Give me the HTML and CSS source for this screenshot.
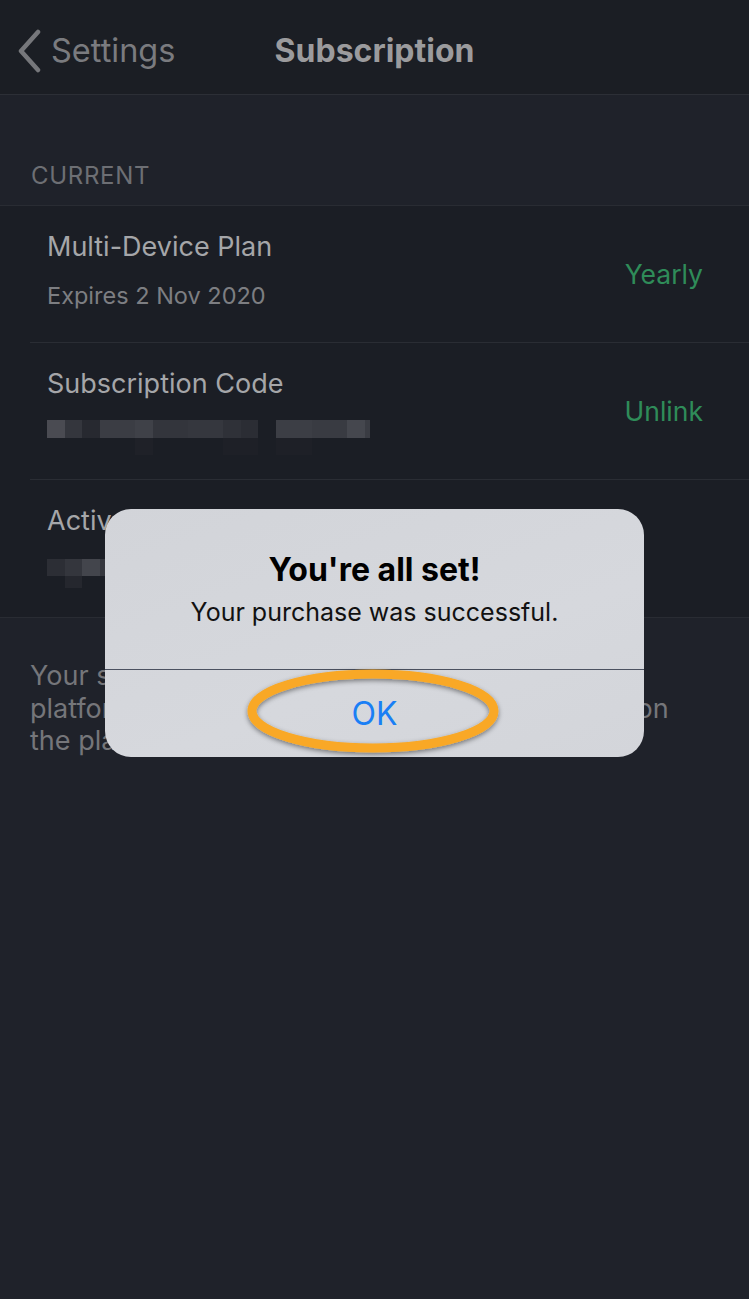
FILE: index.html
```html
<!DOCTYPE html>
<html>
<head>
    <title>Subscription</title>
    <link rel="stylesheet" href="styles.css">
</head>
<body>
    <div class="screen">
        <div class="navbar">
            <a class="back">
                <svg class="chevron" width="26" height="44" viewBox="0 0 26 44"><path d="M22 3 L5 22 L22 41" fill="none" stroke="#76777b" stroke-width="4.5" stroke-linecap="round" stroke-linejoin="round"/></svg>
                <span>Settings</span>
            </a>
            <div class="nav-title">Subscription</div>
        </div>

        <div class="section-header">CURRENT</div>

        <div class="group">
            <div class="row">
                <div class="row-main">
                    <div class="row-title">Multi-Device Plan</div>
                    <div class="row-sub">Expires 2 Nov 2020</div>
                </div>
                <div class="row-action">Yearly</div>
            </div>
            <div class="row">
                <div class="row-main">
                    <div class="row-title">Subscription Code</div>
                    <svg class="blur" width="330" height="36" viewBox="0 0 330 36">
                        <rect x="0" y="0" width="18" height="18" fill="#4a4b52"/>
                        <rect x="18" y="0" width="17" height="18" fill="#34363d"/>
                        <rect x="35" y="0" width="18" height="18" fill="#272930"/>
                        <rect x="53" y="0" width="35" height="18" fill="#3b3d44"/>
                        <rect x="88" y="0" width="18" height="18" fill="#3f4148"/>
                        <rect x="106" y="0" width="35" height="18" fill="#33353c"/>
                        <rect x="141" y="0" width="35" height="18" fill="#35373e"/>
                        <rect x="176" y="0" width="18" height="18" fill="#2f3138"/>
                        <rect x="194" y="0" width="17" height="18" fill="#2b2d34"/>
                        <rect x="229" y="0" width="36" height="18" fill="#3c3e45"/>
                        <rect x="265" y="0" width="35" height="18" fill="#393b42"/>
                        <rect x="300" y="0" width="18" height="18" fill="#45474e"/>
                        <rect x="318" y="0" width="5" height="18" fill="#3a3c43"/>
                        <rect x="88" y="18" width="18" height="17" fill="#1f2128"/>
                        <rect x="176" y="18" width="35" height="17" fill="#1e2027"/>
                        <rect x="229" y="18" width="36" height="17" fill="#1e2027"/>
                    </svg>
                </div>
                <div class="row-action">Unlink</div>
            </div>
            <div class="row">
                <div class="row-main">
                    <div class="row-title">Active Devices</div>
                    <svg class="blur blur-low" width="330" height="36" viewBox="0 0 330 36">
                        <rect x="0" y="0" width="18" height="17" fill="#2c2e35"/>
                        <rect x="18" y="0" width="17" height="17" fill="#34363d"/>
                        <rect x="35" y="0" width="18" height="17" fill="#43454c"/>
                        <rect x="53" y="0" width="14" height="17" fill="#35373e"/>
                        <rect x="18" y="17" width="17" height="12" fill="#25272e"/>
                    </svg>
                </div>
            </div>
        </div>

        <p class="footer">Your subscription is shared across every<br>platform. To cancel it, manage the subscription on<br>the platform where you first purchased it.</p>
    </div>

    <div class="alert">
        <div class="alert-body">
            <div class="alert-title">You're all set!</div>
            <div class="alert-text">Your purchase was successful.</div>
        </div>
        <div class="alert-button">OK</div>
        <svg class="highlight" width="270" height="100" viewBox="0 0 270 100">
            <defs>
                <filter id="shade" x="-10%" y="-20%" width="120%" height="140%">
                    <feDropShadow dx="0" dy="2" stdDeviation="2.5" flood-color="#000" flood-opacity="0.45"/>
                </filter>
            </defs>
            <ellipse cx="135" cy="49" rx="121" ry="37" fill="none" stroke="#f9a825" stroke-width="9" filter="url(#shade)"/>
        </svg>
    </div>
</body>
</html>
```

FILE: styles.css
```css
body, html {
    margin: 0;
    padding: 0;
    background-color: #1f222a;
    font-family: Inter, "Noto Sans", sans-serif;
}

.screen {
    width: 749px;
    height: 1299px;
    display: flex;
    flex-direction: column;
}

.navbar {
    height: 95px;
    box-sizing: border-box;
    padding-top: 6px;
    background-color: #1b1e24;
    border-bottom: 1px solid #2c2f36;
    display: flex;
    align-items: center;
    position: relative;
}

.back {
    display: flex;
    align-items: center;
    padding-left: 16px;
    color: #7a7b7f;
    font-size: 32.5px;
    gap: 9px;
}

.chevron {
    margin-top: 2px;
}

.nav-title {
    position: absolute;
    left: 0;
    right: 0;
    top: 6px;
    bottom: 0;
    display: flex;
    align-items: center;
    justify-content: center;
    color: #9b9b9d;
    font-size: 32px;
    font-weight: 700;
    pointer-events: none;
}

.section-header {
    height: 110px;
    box-sizing: border-box;
    padding: 66px 0 0 31px;
    color: #6d6f74;
    font-size: 24px;
    letter-spacing: 0.7px;
}

.group {
    background-color: #1b1e25;
    border-top: 1px solid #292c33;
    border-bottom: 1px solid #292c33;
}

.row {
    height: 137px;
    margin-left: 30px;
    padding-right: 46px;
    padding-left: 17px;
    padding-bottom: 8px;
    box-sizing: border-box;
    display: flex;
    align-items: center;
    justify-content: space-between;
    border-bottom: 1px solid #2a2d34;
}

.row:last-child {
    border-bottom: none;
}

.row-main {
    display: flex;
    flex-direction: column;
    gap: 18px;
}

.row-title {
    color: #a5a6a9;
    font-size: 27px;
}

.row-sub {
    color: #7d7e82;
    font-size: 23.5px;
}

.row-action {
    color: #2f8c59;
    font-size: 26.5px;
    padding-top: 8px;
}

.blur {
    display: block;
    margin-top: 2px;
    margin-bottom: -8px;
}

.blur-low {
    margin-top: 4px;
    margin-bottom: -10px;
}

.footer {
    margin: 42px 0 0 30px;
    color: #75767a;
    font-size: 27px;
    line-height: 32.5px;
}

.alert {
    position: absolute;
    left: 105px;
    top: 509px;
    width: 539px;
    height: 248px;
    border-radius: 26px;
    background: linear-gradient(160deg, #d2d4d9, #d6d8dd 60%, #d3d5da);
    display: flex;
    flex-direction: column;
}

.alert-body {
    height: 161px;
    box-sizing: border-box;
    padding-top: 41px;
    text-align: center;
    border-bottom: 1px solid #4b5160;
}

.alert-title {
    color: #000;
    font-size: 32px;
    font-weight: 700;
}

.alert-text {
    color: #111;
    font-size: 25px;
    margin-top: 8px;
}

.alert-button {
    flex: 1;
    display: flex;
    align-items: center;
    justify-content: center;
    color: #1a7ff5;
    font-size: 32px;
}

.highlight {
    position: absolute;
    left: 133px;
    top: 153px;
}
```
